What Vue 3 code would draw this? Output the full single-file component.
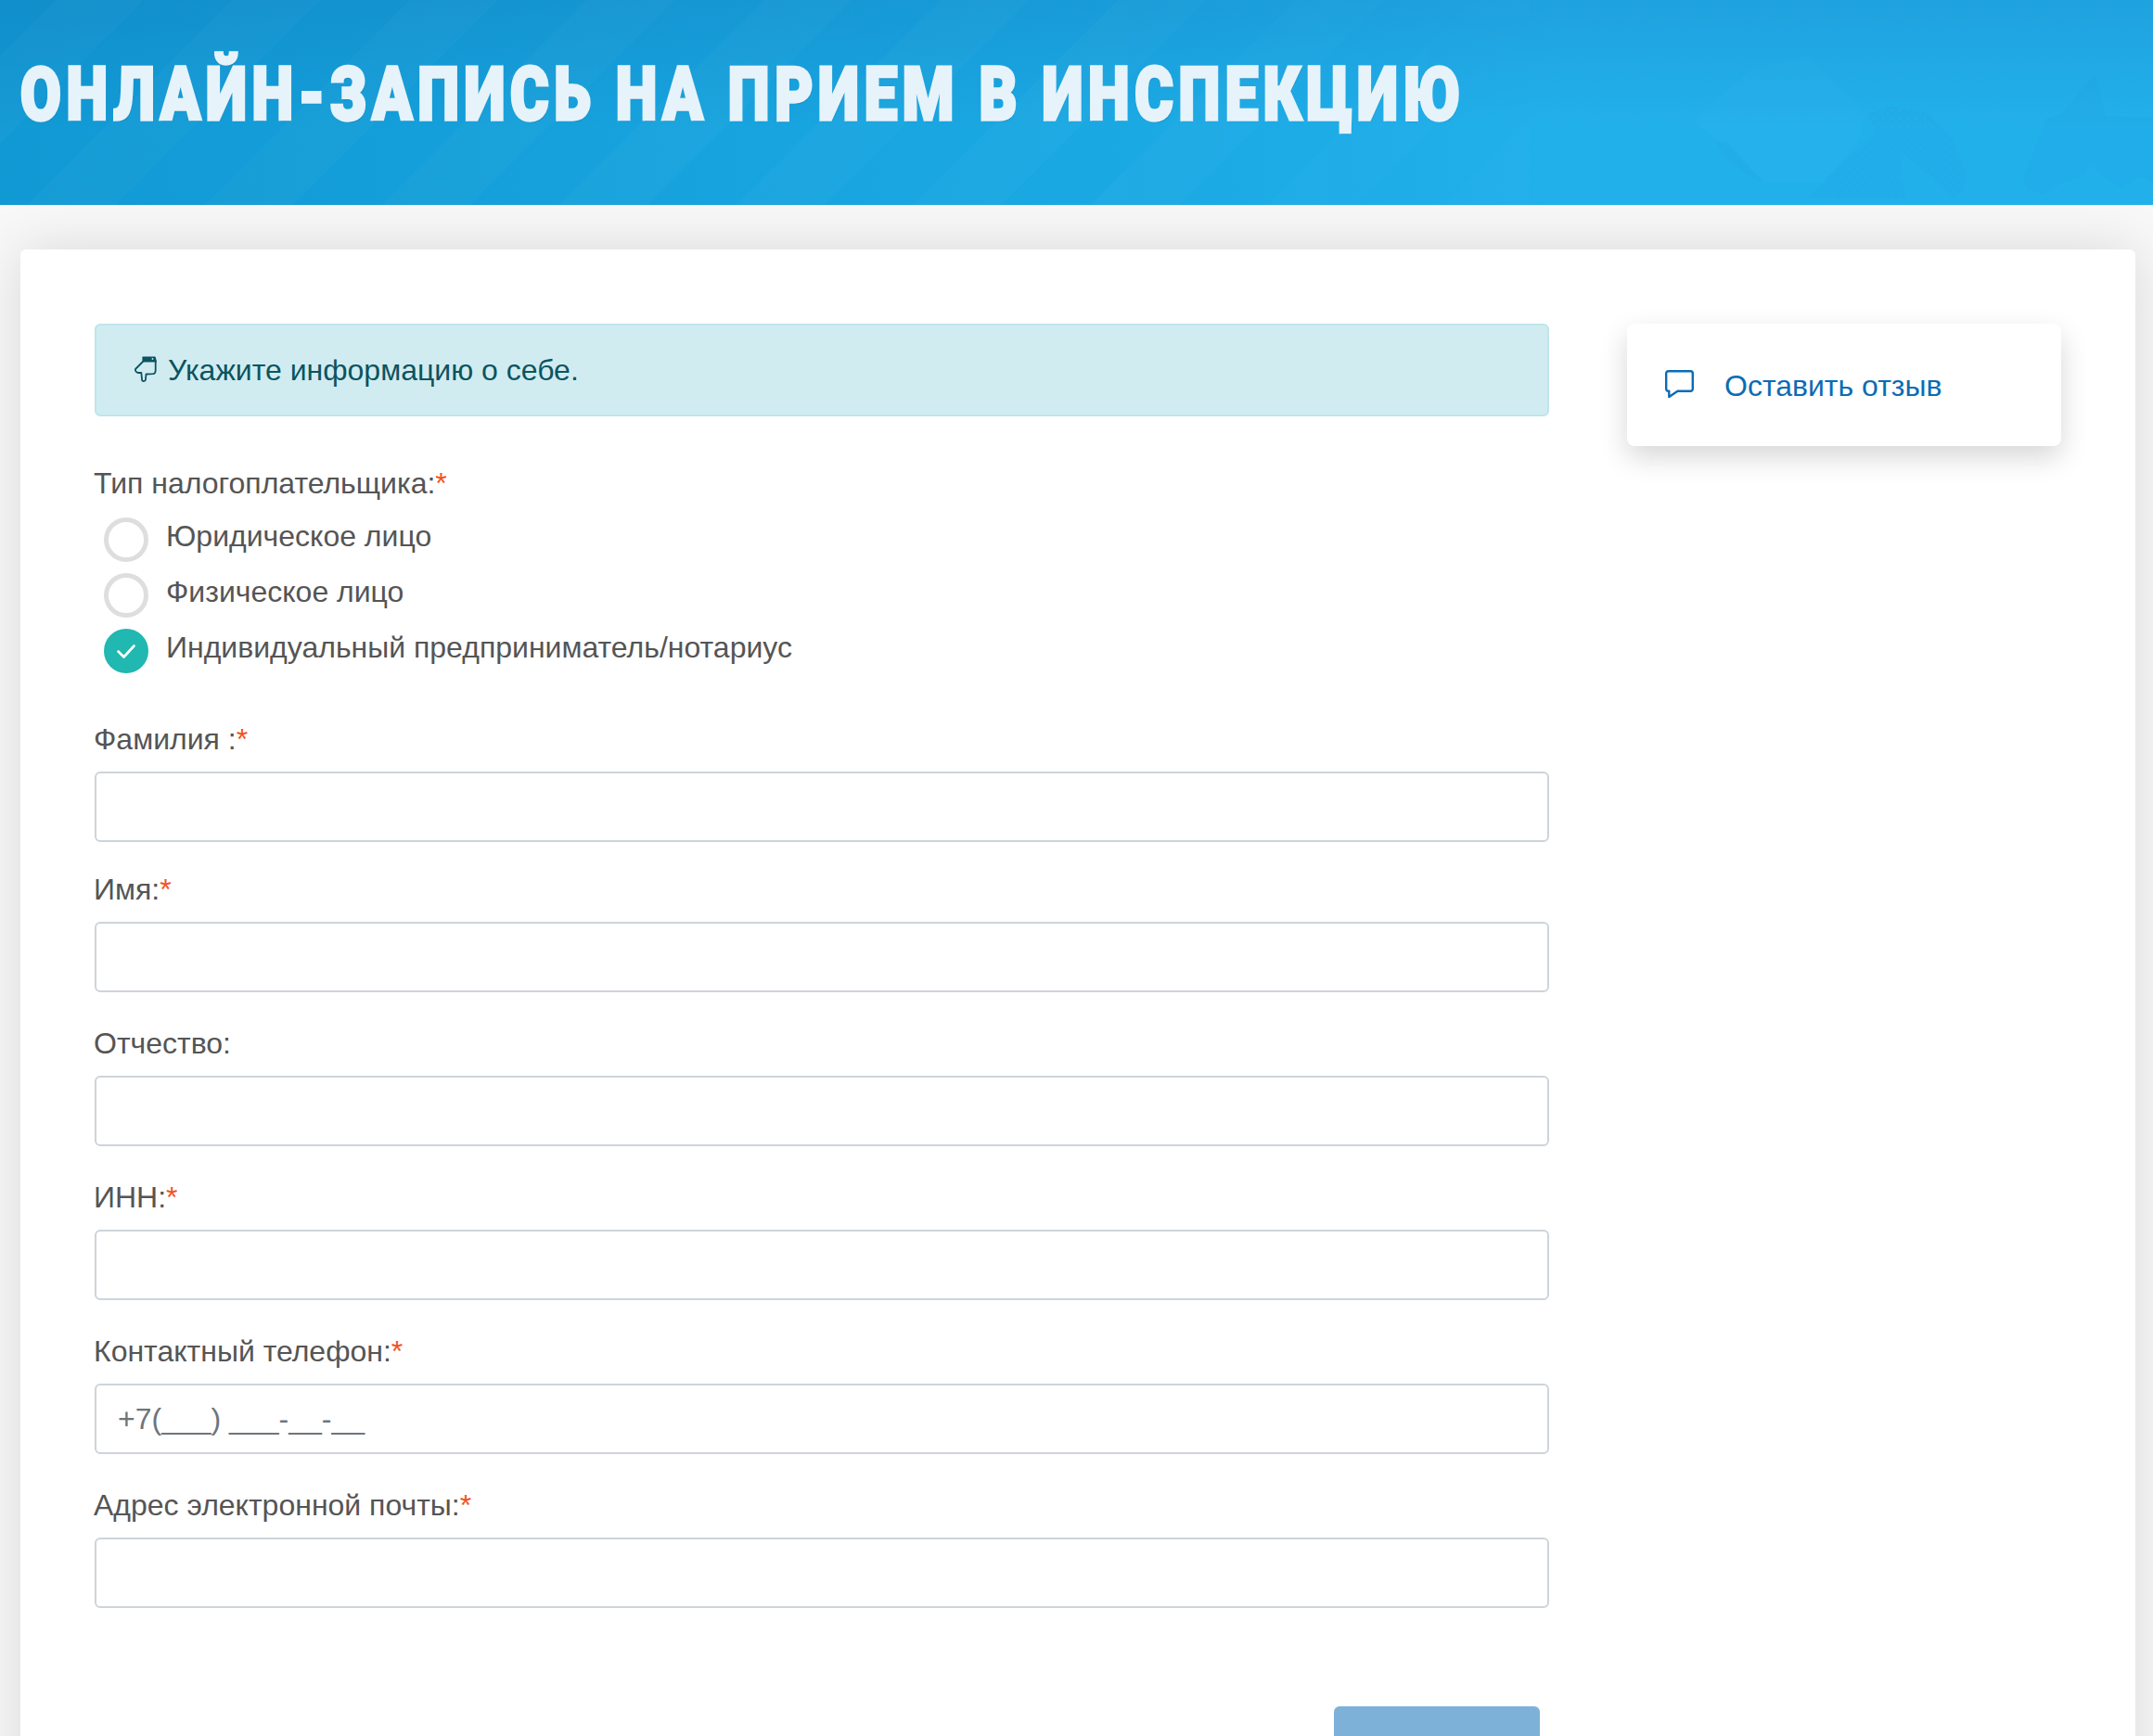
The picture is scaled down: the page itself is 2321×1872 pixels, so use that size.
<script setup>
const fields = [
  { label: 'Фамилия :', req: true, value: '', tight: true },
  { label: 'Имя:', req: true, value: '' },
  { label: 'Отчество:', req: false, value: '' },
  { label: 'ИНН:', req: true, value: '' },
  { label: 'Контактный телефон:', req: true, value: '+7(___) ___-__-__' },
  { label: 'Адрес электронной почты:', req: true, value: '' },
]
const radios = [
  { label: 'Юридическое лицо', on: false },
  { label: 'Физическое лицо', on: false },
  { label: 'Индивидуальный предприниматель/нотариус', on: true },
]
</script>

<template>
  <div class="page">
    <header class="banner">
      <svg class="peaks" viewBox="0 0 671 221" aria-hidden="true">
        <defs>
          <pattern id="spark" width="9" height="9" patternUnits="userSpaceOnUse">
            <circle cx="2" cy="2" r=".7" fill="#8fd0ee" opacity=".5" />
            <circle cx="6.5" cy="6.5" r=".5" fill="#8fd0ee" opacity=".3" />
          </pattern>
        </defs>
        <path d="M175 130 240 73 300 60 359 123 355 150 317 197 252 197 201 150Z" fill="#fff" opacity=".015" />
        <path d="M199 152 212 153 227 170 252 197 240 193 210 170Z" fill="#0a7cc0" opacity=".05" />
        <path d="M300 213 321 190 355 160 372 143 364 123 389 115 428 122 454 147 471 190 466 207 454 213 428 187 398 163 404 213Z" fill="#0a7cc0" opacity=".055" />
        <path d="M355 160 372 143 364 123 389 115 428 122 454 147 471 190 466 207 454 213 428 187 398 163 404 213 320 213Z" fill="url(#spark)" opacity=".35" />
        <path d="M531 190 543 163 556 128 573 123 608 80 620 125 671 127 671 197 655 190 638 203 616 190 603 177 595 190 573 197 552 210 535 203Z" fill="#0a7cc0" opacity=".05" />
      </svg>
      <h1 class="title">ОНЛАЙН-ЗАПИСЬ НА ПРИЕМ В ИНСПЕКЦИЮ</h1>
    </header>
    <main class="card">
      <section class="form">
        <div class="alert">
          <svg class="hand" viewBox="0 0 25 28" aria-hidden="true">
            <path d="M9 1h13l1.4 5H9z" fill="#0c5460" stroke="#0c5460" stroke-width="1.2" stroke-linejoin="round" />
            <circle cx="19.5" cy="3" r=".9" fill="#d1ecf1" />
            <path d="M9 6 4.5 10.5 1 14c-.6 1.6.9 3.6 3 4l3.3-.2.8 8c.2 1.6 3.3 1.6 3.8 0l.6-6.3 7.5-.3c2.2-.2 2.6-2 2.7-3.7V6" fill="none" stroke="#0c5460" stroke-width="1.8" stroke-linejoin="round" stroke-linecap="round" />
          </svg>
          <span>Укажите информацию о себе.</span>
        </div>

        <div class="type-label">Тип налогоплательщика:<span class="req">*</span></div>
        <div class="radios">
          <div v-for="r in radios" :key="r.label" class="radio">
            <span class="dot" :class="{ on: r.on }">
              <svg v-if="r.on" viewBox="0 0 48 48" aria-hidden="true">
                <path d="M15.5 24.5l6 6 11-12" fill="none" stroke="#fff" stroke-width="2.6" stroke-linecap="round" stroke-linejoin="round" />
              </svg>
            </span>
            <span class="radio-text">{{ r.label }}</span>
          </div>
        </div>

        <div class="fields">
          <div v-for="f in fields" :key="f.label" class="field" :class="{ tight: f.tight }">
            <label class="label">{{ f.label }}<span v-if="f.req" class="req">*</span></label>
            <div class="input">{{ f.value }}</div>
          </div>
        </div>

        <div class="actions">
          <div class="submit"></div>
        </div>
      </section>

      <aside class="side">
        <a class="feedback">
          <svg class="bubble" viewBox="0 0 31 31" aria-hidden="true">
            <path d="M3.5 1.2h24a2.3 2.3 0 0 1 2.3 2.3v17a2.3 2.3 0 0 1-2.3 2.3H13.5L4.3 29v-6.2h-.8a2.3 2.3 0 0 1-2.3-2.3v-17a2.3 2.3 0 0 1 2.3-2.3z" fill="none" stroke="#0b6cb5" stroke-width="2.4" stroke-linejoin="round" />
          </svg>
          <span>Оставить отзыв</span>
        </a>
      </aside>
    </main>
  </div>
</template>

<style>
html, body { margin: 0; height: 100%; overflow: hidden; background: #f8f8f8; }
</style>

<style scoped>
.page {
  width: 2321px;
  height: 1872px;
  overflow: hidden;
  font-family: "Liberation Sans", Arial, sans-serif;
  background: #f8f8f8;
}
.banner {
  position: relative;
  height: 221px;
  box-sizing: border-box;
  padding: 52px 0 0 22px;
  overflow: hidden;
  background:
    linear-gradient(180deg, rgba(10, 70, 140, .13) 0, rgba(10, 70, 140, 0) 62%),
    linear-gradient(90deg, #1199d4 0, #1aa8e3 50%, #22b0eb 72%, #22b0eb 100%);
}
.banner::before {
  content: "";
  position: absolute;
  inset: 0;
  background: repeating-linear-gradient(-45deg, rgba(255,255,255,0) 0 68px, rgba(255,255,255,.025) 68px 135px);
  -webkit-mask-image: linear-gradient(90deg, #000 0, #000 50%, transparent 78%);
  mask-image: linear-gradient(90deg, #000 0, #000 50%, transparent 78%);
}
.peaks {
  position: absolute;
  right: 0;
  top: 0;
  width: 671px;
  height: 221px;
}
.title {
  position: relative;
  margin: 0;
  font-family: Roboto, "Liberation Sans", sans-serif;
  font-weight: 900;
  font-size: 79px;
  line-height: 100px;
  letter-spacing: 7px;
  color: #e6f3fa;
  -webkit-text-stroke: 3.5px #e6f3fa;
  text-shadow: 1px 2px 1px rgba(0, 60, 110, .45);
  white-space: nowrap;
  transform: scaleX(.803);
  transform-origin: left center;
}
.card {
  box-sizing: border-box;
  width: 2280px;
  height: 1700px;
  margin: 48px 0 0 22px;
  padding: 80px 80px 0;
  display: flex;
  background: #fff;
  border-radius: 6px;
  box-shadow: 0 0 60px rgba(0, 0, 0, .13);
}
.form {
  width: 1568px;
  flex: none;
  color: #555;
  font-size: 32px;
}
.alert {
  box-sizing: border-box;
  height: 100px;
  padding: 0 41px;
  display: flex;
  align-items: center;
  gap: 11px;
  background: #d1ecf1;
  border: 2px solid #bee5eb;
  border-radius: 6px;
  color: #0c5460;
}
.hand { width: 25px; height: 28px; flex: none; margin-top: -2px; }
.type-label { margin: 50px 0 0 -1px; line-height: 44px; }
.req { color: #f4511e; }
.radios {
  margin-top: 15px;
  padding-left: 10px;
}
.radio {
  display: flex;
  height: 60px;
  color: #555;
}
.dot {
  box-sizing: border-box;
  width: 48px;
  height: 48px;
  border-radius: 50%;
  border: 5px solid #dedede;
  flex: none;
  overflow: hidden;
}
.dot.on { border: 0; background: #20b8b0; }
.dot svg { display: block; width: 48px; height: 48px; }
.radio-text { margin-left: 19px; line-height: 40px; }
.fields { margin-top: 37px; }
.field { margin-bottom: 33px; }
.field.tight { margin-bottom: 29px; }
.label {
  display: block;
  line-height: 44px;
  margin: 0 0 13px -1px;
}
.input {
  box-sizing: border-box;
  height: 76px;
  padding: 0 23px;
  display: flex;
  align-items: center;
  background: #fff;
  border: 2px solid #ced4da;
  border-radius: 6px;
  color: #6c757d;
}
.actions {
  display: flex;
  justify-content: flex-end;
  padding-right: 10px;
  margin-top: 106px;
}
.submit {
  width: 222px;
  height: 70px;
  background: #7eb1d8;
  border-radius: 6px;
}
.side {
  flex: none;
  margin-left: 84px;
}
.feedback {
  box-sizing: border-box;
  width: 468px;
  height: 132px;
  padding: 2px 41px 0;
  display: flex;
  align-items: center;
  gap: 33px;
  background: #fff;
  border-radius: 8px;
  box-shadow: 0 12px 30px rgba(0, 0, 0, .16);
  color: #0b6cb5;
  font-size: 32px;
}
.bubble { width: 31px; height: 31px; flex: none; margin-top: -3px; }
</style>
